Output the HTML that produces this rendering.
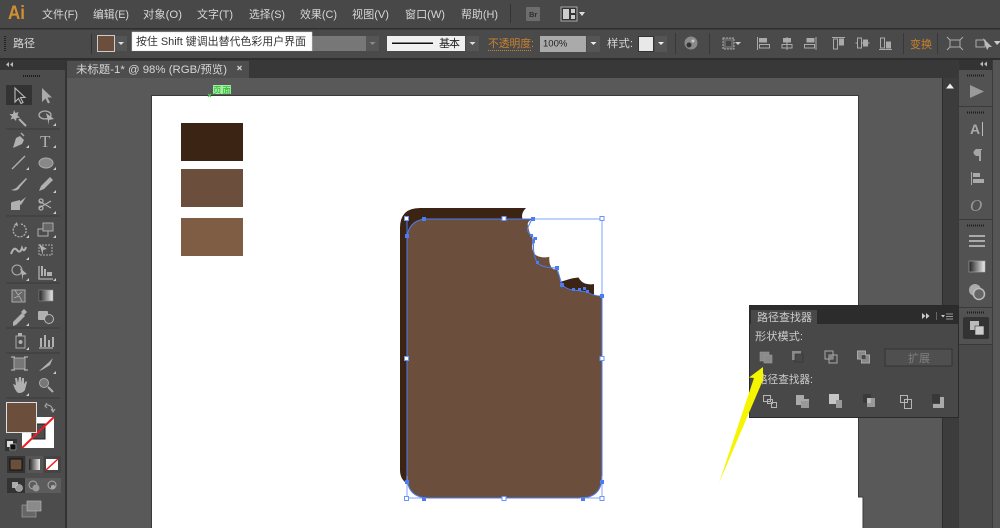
<!DOCTYPE html>
<html><head><meta charset="utf-8"><style>
html,body{margin:0;padding:0;background:#595959;width:1000px;height:528px;overflow:hidden}
svg{display:block;filter:blur(.3px)}
text{font-family:"Liberation Sans","Noto Sans CJK SC",sans-serif;font-size:11px;fill:#d6d6d6}
.i{fill:#b0b0b0}.is{stroke:#b0b0b0;fill:none;stroke-width:1.3}
</style></head><body>
<svg width="1000" height="528" viewBox="0 0 1000 528" xmlns="http://www.w3.org/2000/svg">
<!-- backgrounds -->
<rect width="1000" height="528" fill="#595959"/>
<rect width="1000" height="28" fill="#484848"/>
<rect y="28" width="1000" height="1.5" fill="#2e2e2e"/>
<rect y="29.5" width="1000" height="29" fill="#4a4a4a"/>
<rect y="58" width="1000" height="2" fill="#2e2e2e"/>
<!-- artboard -->
<rect x="151" y="95" width="708" height="433" fill="#3a3a3a"/>
<rect x="152" y="96" width="706" height="432" fill="#fff"/>
<rect x="858" y="497" width="4.5" height="31" fill="#fff"/>
<rect x="862.5" y="497" width="1" height="31" fill="#3a3a3a"/>
<rect x="858" y="496.500" width="5" height="1" fill="#3a3a3a"/>
<!-- tab bar -->
<rect x="66" y="60" width="893" height="18" fill="#383838"/>
<rect x="67" y="61" width="182" height="17" fill="#4e4e4e"/>
<text x="76" y="73" textLength="151" lengthAdjust="spacingAndGlyphs" fill="#cfcfcf">未标题-1* @ 98% (RGB/预览)</text>
<path d="M237.500 66l4 4m0-4l-4 4" stroke="#ccc" stroke-width="1.300"/>
<!-- scrollbar / right -->
<rect x="943" y="78" width="16" height="450" fill="#3c3c3c"/>
<path d="M946 88.500l4-5 4 5z" fill="#eee"/>
<rect x="942" y="78" width="1" height="450" fill="#2e2e2e"/>
<!-- right dock -->
<rect x="958" y="60" width="42" height="468" fill="#3a3a3a"/>
<rect x="959" y="60" width="33" height="10" fill="#333"/>
<rect x="993" y="60" width="7" height="468" fill="#555"/>
<path d="M987 61.500v5l-3-2.500zM983 61.500v5l-3-2.500z" fill="#bbb"/>
<rect x="959" y="70" width="33" height="36" fill="#525252"/>
<rect x="959" y="107" width="33" height="112" fill="#525252"/>
<rect x="959" y="220" width="33" height="87" fill="#525252"/>
<rect x="959" y="308" width="33" height="36" fill="#525252"/>
<rect x="959" y="345" width="33" height="183" fill="#4a4a4a"/>
<path d="M967 75.500h18M967 112.500h18M967 225.500h18M967 312.500h18" stroke="#1c1c1c" stroke-width="2" stroke-dasharray="1 1"/>
<path d="M970 85l14 6.500-14 6.500z" fill="#9a9a9a"/>
<text x="970" y="134" style="font-size:14px;font-weight:bold;fill:#aaa">A</text><rect x="982" y="122" width="1" height="14" fill="#bbb"/>
<path d="M971 149h11v1h-1v11h-2v-5h-3q-5-3.500 0-7z" fill="#a5a5a5"/>
<path d="M971.500 172v13" stroke="#aaa" fill="none"/><rect x="973" y="173" width="7" height="4" fill="#aaa"/><rect x="973" y="179" width="11" height="4" fill="#aaa"/>
<text x="970" y="211" style="font-size:17px;font-family:'Liberation Serif',serif;font-style:italic;fill:#999">O</text>
<path d="M969 236h16M969 241h16M969 246h16" stroke="#aaa" stroke-width="2"/>
<defs><linearGradient id="gr" x1="0" x2="1"><stop offset="0" stop-color="#222"/><stop offset="1" stop-color="#eee"/></linearGradient></defs>
<rect x="969" y="261" width="16" height="11" fill="url(#gr)" stroke="#aaa" stroke-width=".6"/>
<circle cx="975" cy="290" r="6" fill="#aaa"/><circle cx="979" cy="294" r="5.500" fill="#666" stroke="#bbb" stroke-width="1.500"/>
<rect x="963" y="317" width="26" height="22" rx="2" fill="#333"/>
<rect x="970" y="321" width="9" height="9" fill="#bbb"/><rect x="975" y="326" width="9" height="9" fill="#ccc" stroke="#333" stroke-width=".6"/>

<!-- Menu -->
<text x="8" y="19" style="font-size:19px;font-weight:bold;fill:#d09030" textLength="17" lengthAdjust="spacingAndGlyphs">Ai</text>
<text x="42" y="18" textLength="36" lengthAdjust="spacingAndGlyphs">文件(F)</text>
<text x="93" y="18" textLength="36" lengthAdjust="spacingAndGlyphs">编辑(E)</text>
<text x="143" y="18" textLength="39" lengthAdjust="spacingAndGlyphs">对象(O)</text>
<text x="197" y="18" textLength="36" lengthAdjust="spacingAndGlyphs">文字(T)</text>
<text x="249" y="18" textLength="36" lengthAdjust="spacingAndGlyphs">选择(S)</text>
<text x="300" y="18" textLength="37" lengthAdjust="spacingAndGlyphs">效果(C)</text>
<text x="352" y="18" textLength="37" lengthAdjust="spacingAndGlyphs">视图(V)</text>
<text x="405" y="18" textLength="40" lengthAdjust="spacingAndGlyphs">窗口(W)</text>
<text x="461" y="18" textLength="37" lengthAdjust="spacingAndGlyphs">帮助(H)</text>
<rect x="510" y="4" width="1" height="19" fill="#333"/>
<rect x="526" y="7" width="14" height="14" rx="1" fill="#6d6d6d"/><text x="529" y="17" style="font-size:7.500px;font-weight:bold;fill:#2e2e2e">Br</text>
<rect x="561" y="7" width="16" height="14" fill="#333" stroke="#aaa"/><rect x="563" y="9" width="6" height="10" fill="#ccc"/><rect x="571" y="9" width="4" height="4" fill="#ccc"/><rect x="571" y="15" width="4" height="4" fill="#ccc"/>
<path d="M579 12h6l-3 4z" fill="#ddd"/>

<!-- Control bar -->
<path d="M5 36v15" stroke="#222" stroke-width="2" stroke-dasharray="1 1"/>
<text x="13" y="47" textLength="22" lengthAdjust="spacingAndGlyphs">路径</text>
<rect x="91" y="34" width="1" height="20" fill="#333"/>
<rect x="97.500" y="35.500" width="17" height="16" fill="#6b4f3c" stroke="#ccc"/>
<rect x="115" y="36" width="12" height="15" fill="#555"/><path d="M118 42h6l-3 3z" fill="#ddd"/>
<rect x="312" y="36" width="54" height="15" fill="#777"/>
<rect x="366" y="36" width="13" height="15" fill="#555"/><path d="M369.500 42h6l-3 3z" fill="#888"/>
<rect x="132" y="32" width="180" height="19" fill="#fff" stroke="#ddd" stroke-width=".5"/>
<rect x="132" y="51" width="180" height="1" fill="#333" opacity=".5"/>
<text x="136" y="45" textLength="170" lengthAdjust="spacingAndGlyphs" style="fill:#333">按住 Shift 键调出替代色彩用户界面</text>
<rect x="387" y="36" width="78" height="15" fill="#f0f0f0"/>
<rect x="392" y="42.500" width="41" height="1.500" fill="#111"/>
<text x="439" y="47" textLength="21" style="fill:#222">基本</text>
<rect x="466" y="36" width="13" height="15" fill="#555"/><path d="M469.500 42h6l-3 3z" fill="#ddd"/>
<text x="488" y="47" textLength="46" lengthAdjust="spacingAndGlyphs" style="fill:#c9822e">不透明度:</text>
<path d="M488 50.500h43" stroke="#c9822e" stroke-dasharray="1 1"/>
<rect x="540" y="36" width="46" height="16" fill="#aaa"/>
<text x="543" y="46.500" style="font-size:9.500px;fill:#222">100%</text>
<rect x="587" y="36" width="13" height="16" fill="#555"/><path d="M590.500 42h6l-3 3z" fill="#eee"/>
<text x="607" y="47" textLength="26" lengthAdjust="spacingAndGlyphs">样式:</text>
<rect x="638" y="36" width="16" height="16" fill="#333"/><rect x="639" y="37" width="14" height="14" fill="#e8e8e8"/>
<rect x="655" y="36" width="12" height="16" fill="#555"/><path d="M658 42h6l-3 3z" fill="#eee"/>
<rect x="675" y="33" width="1" height="21" fill="#383838"/>
<circle cx="691" cy="43" r="6.500" fill="#8a8a8a"/><circle cx="689" cy="45" r="2.500" fill="#333"/><circle cx="693" cy="41" r="1.500" fill="#ccc"/>
<rect x="709" y="33" width="1" height="21" fill="#383838"/>
<rect x="723" y="38" width="11" height="11" fill="#666" stroke="#aaa" stroke-dasharray="2 1"/><rect x="726" y="41" width="5" height="5" fill="#444"/>
<path d="M735 42h6l-3 3z" fill="#ccc"/>
<g fill="none" stroke="#aaa">
<path d="M757.500 37v13"/><rect x="759.500" y="38.500" width="7" height="3.500" fill="#aaa"/><rect x="759.500" y="44.500" width="10" height="3.500"/>
<path d="M787 37v13"/><rect x="783.500" y="38.500" width="7" height="3.500" fill="#aaa"/><rect x="782" y="44.500" width="10" height="3.500"/>
<path d="M816 37v13"/><rect x="807" y="38.500" width="7" height="3.500" fill="#aaa"/><rect x="804.500" y="44.500" width="10" height="3.500"/>
<path d="M832 37.500h13"/><rect x="833.500" y="39" width="4" height="10"/><rect x="839.500" y="39" width="4" height="6" fill="#aaa"/>
<path d="M855.500 43h14"/><rect x="857.500" y="38" width="4" height="10" fill="#4a4a4a"/><rect x="863.500" y="40" width="4" height="6" fill="#aaa"/>
<path d="M879 49.500h13"/><rect x="880.500" y="38" width="4" height="10"/><rect x="886.500" y="42" width="4" height="6" fill="#aaa"/>
</g>
<rect x="903" y="33" width="1" height="21" fill="#383838"/>
<text x="910" y="48" textLength="22" lengthAdjust="spacingAndGlyphs" style="fill:#c9822e">变换</text>
<rect x="937" y="33" width="1" height="21" fill="#383838"/>
<rect x="950" y="40" width="10" height="7" fill="none" stroke="#aaa"/>
<path d="M947 37l3 3m10 0l3-3m-13 10l-3 3m13-3l3 3" stroke="#aaa" fill="none"/>
<rect x="976" y="40" width="9" height="7" fill="none" stroke="#aaa"/>
<path d="M983 38l4 12 2-3 3 0z" fill="#bbb"/>
<path d="M994 41h6v1l-3 3z" fill="#ccc"/>

<!-- Left toolbox -->
<rect x="0" y="60" width="66" height="468" fill="#4c4c4c"/>
<rect x="65" y="60" width="2" height="468" fill="#333"/>
<rect x="0" y="60" width="65" height="10" fill="#353535"/>
<path d="M9 62v5l-3-2.500zM13 62v5l-3-2.500z" fill="#bbb"/>
<path d="M23 76h18" stroke="#1c1c1c" stroke-width="2" stroke-dasharray="1 1"/>
<rect x="6" y="85" width="26" height="20" fill="#333"/>
<path d="M15 88v14l3.500-3.500 2.500 5 2-1-2.500-5h4.500z" fill="none" stroke="#bbb" stroke-width="1.100"/>
<path d="M42 88v14l3.500-3.500 2.500 5 2-1-2.500-5h4.500z" fill="#aaa"/>
<g class="i">
<path d="M14 110l1.500 3 3-1-1 3.500 2.500 2-3.500.5-.5 3-2.500-2.500-3 1 1.500-3-2.500-2.500 3.500 0z"/><path d="M19 119l7 7" class="is" style="stroke-width:2"/>
<ellipse cx="45" cy="115" rx="6" ry="4" class="is"/><path d="M46 113l8 6-5 1 0 5z"/>
<path d="M13 148l3-10 4-2 4 4-2 4-9 4z"/><path d="M24 136l-3-3" class="is"/>
<text x="40" y="147" style="font-family:'Liberation Serif',serif;font-size:17px;fill:#b0b0b0">T</text>
<path d="M12 169l13-13" class="is"/>
<ellipse cx="46" cy="163" rx="7" ry="5" fill="#888" stroke="#aaa"/>
<path d="M11 190q5-1 7-4l8-8 1 1-7 8q-2 5-9 3z"/>
<path d="M39 191l2-5 9-9 3 3-9 9z"/>
<path d="M12 202l8-2 0 10h-9v-7zM18 203l8-6-5 8z"/>
<path d="M39 201l12 7M39 208l12-7" class="is"/><circle cx="41" cy="201" r="2" class="is"/><circle cx="41" cy="208" r="2" class="is"/>
<path d="M21 224a6.500 6.500 0 1 1-5 1" class="is" stroke-dasharray="2 1.200"/><path d="M17 222l-3 3 4 1z"/>
<rect x="38" y="229" width="10" height="7" class="is" style="stroke-width:1"/><rect x="43" y="223" width="10" height="8" fill="#666" stroke="#aaa"/>
<path d="M11 254q3-8 6-4t5-2q2 5 4-1" class="is" style="stroke-width:2"/>
<rect x="39" y="245" width="13" height="10" class="is" stroke-dasharray="2 1" style="stroke-width:1"/><path d="M39 244l8 5-4 1 0 5z"/>
<circle cx="17" cy="270" r="5" class="is" style="stroke-width:1"/><path d="M20 268l7 6-4 1 0 5z"/>
<path d="M39 266v13h14" class="is"/><rect x="41" y="266" width="2" height="10"/><rect x="44" y="269" width="2" height="7"/><rect x="47" y="272" width="5" height="4"/>
<rect x="12" y="290" width="13" height="12" fill="#666" stroke="#aaa"/><path d="M15 290l3 5 4-3M14 298l5-2 3 5" class="is" style="stroke-width:.8"/>
</g>
<rect x="39" y="290" width="14" height="11" fill="url(#gr)" stroke="#888" stroke-width=".6"/>
<g class="i">
<path d="M13 322l9-9 3 3-9 9-3 1z"/><path d="M21 312l3-3 3 3-3 3z"/>
<rect x="38" y="311" width="10" height="9" rx="1"/><circle cx="49" cy="319" r="4.500" fill="#555" stroke="#bbb"/>
<rect x="16" y="336" width="9" height="12" fill="none" stroke="#aaa"/><circle cx="20.500" cy="342" r="2"/><rect x="18" y="333" width="4" height="3"/>
<path d="M39 348h14" class="is"/><rect x="40" y="338" width="2" height="9"/><rect x="44" y="335" width="2" height="12"/><rect x="48" y="340" width="2" height="7"/><rect x="52" y="337" width="2" height="10"/>
<rect x="14" y="358" width="11" height="11" fill="#777" stroke="#aaa"/><path d="M11 357h4m9 0h4m-17 13h4m9 0h4" class="is"/>
<path d="M39 371l9-8 5-5-3 7-8 5z"/>
<path d="M13 384l3 1-1-7 2 0 1 5 1-6 2 0 0 6 1-5 2 0 0 6 2-3 1 1-2 8q-2 3-6 3-3 0-6-9z"/>
<circle cx="44" cy="383" r="4.500" fill="#777" stroke="#aaa"/><path d="M48 387l5 5" class="is" style="stroke-width:2"/>
</g>
<path fill="#ccc" d="M29 148l-3 0 3-3zM56 126l-3 0 3-3zM56 148l-3 0 3-3zM29 170l-3 0 3-3zM56 170l-3 0 3-3zM56 193l-3 0 3-3zM56 214l-3 0 3-3zM29 238l-3 0 3-3zM56 238l-3 0 3-3zM29 260l-3 0 3-3zM29 281l-3 0 3-3zM56 281l-3 0 3-3zM29 326l-3 0 3-3zM29 350l-3 0 3-3zM56 374l-3 0 3-3zM29 396l-3 0 3-3z"/>
<path d="M6 129h54M6 216h54M6 283h54M6 328h54M6 353h54M6 398h54" stroke="#3a3a3a"/>
<!-- fill/stroke -->
<rect x="22" y="417" width="32" height="31" fill="#fff"/>
<rect x="32" y="424" width="13" height="15" fill="#4c4c4c" stroke="#222"/>
<path d="M22 448l32-31" stroke="#f01a22" stroke-width="2"/>
<rect x="6.500" y="402.500" width="30" height="30" fill="#6b4f3c" stroke="#ddd"/>
<path d="M47 403l-2 3 2 2M45 405q7-1 8 6m-2-2l2 3 2-3" fill="none" stroke="#aaa" stroke-width="1.100"/>
<rect x="5" y="439" width="12" height="12" fill="#333"/><rect x="7" y="441" width="6" height="6" fill="#ddd"/><rect x="10" y="444" width="6" height="6" fill="#111" stroke="#ccc" stroke-width=".6"/>
<rect x="7" y="456" width="18" height="17" fill="#333"/><rect x="10" y="459" width="12" height="11" fill="#6b4f3c" stroke="#111"/>
<rect x="26" y="456" width="17" height="17" fill="#555"/><rect x="29" y="459" width="11" height="11" fill="url(#gr)"/>
<rect x="44" y="456" width="17" height="17" fill="#444"/><rect x="46" y="459" width="12" height="11" fill="#fff"/><path d="M46 470l12-11" stroke="#f01a22" stroke-width="1.500"/>
<rect x="7" y="478" width="18" height="15" fill="#333"/><rect x="25" y="478" width="18" height="15" fill="#5c5c5c"/><rect x="43" y="478" width="18" height="15" fill="#5c5c5c"/>
<rect x="12" y="482" width="6" height="6" fill="#aaa"/><circle cx="19" cy="488" r="3.500" fill="#999" stroke="#ccc" stroke-width=".6"/>
<circle cx="33" cy="485" r="4" fill="none" stroke="#aaa"/><circle cx="36" cy="488" r="3.500" fill="#999"/>
<circle cx="52" cy="485" r="4" fill="none" stroke="#aaa"/><circle cx="53" cy="487" r="2" fill="#aaa"/>
<rect x="22" y="505" width="14" height="12" fill="#666" stroke="#aaa" stroke-width=".6"/><rect x="27" y="501" width="14" height="10" fill="#8a8a8a" stroke="#bbb" stroke-width=".6"/>

<!-- Artwork -->
<rect x="181" y="123" width="62" height="38" fill="#3c2415"/>
<rect x="181" y="169" width="62" height="38" fill="#6b4f3c"/>
<rect x="181" y="218" width="62" height="38" fill="#7f5d45"/>
<rect x="213" y="85" width="18" height="9" fill="#a4eca4"/>
<text x="213" y="93" style="font-size:8.500px;fill:#1fb41f" textLength="18">页面</text>
<path d="M208 94l3 3m0-3l-3 3" stroke="#3fe03f"/>
<path d="M400 228Q400 208 420 208H526Q520 214 523 220L525 236 550 285 566.500 280Q572 278 578.500 277.500 581 282 585 283.500 590 285 594 284V300L420 484H408Q400 480 400 470Z" fill="#3c2415"/>
<path d="M407 240Q407 219 426 219H532.500Q526 222 528.300 226.700 529 233 531.700 236L533.300 241.700Q531.500 246 532.700 250 534 256 541 257 546 258 549.300 256.700 549 263 550.700 266 552 270 556.700 269.300 558 274 560 277.300 559.500 282 561.700 285 566 290 574 290L586.700 291.700Q593 296 602 296V476Q602 498 580 498H429Q407 498 407 476Z" fill="#6b4f3c"/>
<g fill="none" stroke="#4a7cf5" stroke-width="1">
<path d="M407 238Q408 222 424 219H532"/>
<path d="M407 219V476Q407 498 429 498H580Q602 498 602 476V296"/>
<path d="M532 219 528 227Q526 232 533 237L534 242Q532 250 537 263 543 268 557 268L562 285Q568 290 574 290L587 292Q594 296 601 296"/>
<path d="M532 219H602V296" stroke="#7fa4ff"/>
<path d="M407 476V498H424M602 476V498H580" stroke="#7fa4ff"/>
</g>
<g fill="#4a7cf5">
<rect x="405" y="234" width="4" height="4"/><rect x="422" y="217" width="4" height="4"/><rect x="531" y="217" width="4" height="4"/>
<rect x="530" y="234" width="3" height="3"/><rect x="534" y="237" width="3" height="3"/><rect x="532" y="240" width="3" height="3"/>
<rect x="536" y="261" width="3" height="3"/><rect x="555" y="266" width="4" height="4"/><rect x="560" y="283" width="4" height="4"/>
<rect x="572" y="288" width="3" height="3"/><rect x="578" y="288" width="3" height="3"/><rect x="583" y="287" width="3" height="3"/><rect x="586" y="290" width="3" height="3"/><rect x="600" y="294" width="4" height="4"/>
<rect x="405" y="480" width="4" height="4"/><rect x="422" y="497" width="4" height="4"/><rect x="581" y="497" width="4" height="4"/><rect x="600" y="480" width="4" height="4"/>
</g>
<g fill="#fff" stroke="#6d94f5">
<rect x="404.500" y="216.500" width="4" height="4"/><rect x="502" y="216.500" width="4" height="4"/><rect x="600" y="216.500" width="4" height="4"/>
<rect x="404.500" y="356.500" width="4" height="4"/><rect x="600" y="356.500" width="4" height="4"/>
<rect x="404.500" y="496.500" width="4" height="4"/><rect x="502" y="496.500" width="4" height="4"/><rect x="600" y="496.500" width="4" height="4"/>
</g>

<!-- Pathfinder panel -->
<rect x="749" y="305" width="210" height="113" fill="#2a2a2a"/>
<rect x="750" y="306" width="208" height="111" fill="#484848"/>
<rect x="750" y="306" width="208" height="18" fill="#2c2c2c"/>
<rect x="751" y="310" width="66" height="14" fill="#484848"/>
<text x="757" y="321" textLength="55" lengthAdjust="spacingAndGlyphs" style="fill:#ccc">路径查找器</text>
<path d="M922 313v6l3.500-3zM926 313v6l3.500-3z" fill="#ccc"/>
<rect x="936" y="312" width="1" height="8" fill="#666"/>
<path d="M941 315h4l-2 2.500z" fill="#ccc"/><path d="M946 314h7M946 316.500h7M946 319h7" stroke="#999"/>
<text x="755" y="340" textLength="48" lengthAdjust="spacingAndGlyphs" style="fill:#ccc">形状模式:</text>
<!-- shape modes -->
<rect x="760" y="352" width="9" height="9" fill="#8a8a8a" stroke="#999" stroke-width=".6"/><rect x="764" y="355" width="8" height="8" fill="#8a8a8a" stroke="#999" stroke-width=".6"/>
<rect x="792" y="351" width="9" height="9" fill="#8a8a8a"/><rect x="795" y="354" width="8" height="8" fill="#484848" stroke="#333" stroke-width=".6"/>
<rect x="825" y="351" width="8" height="8" fill="none" stroke="#aaa"/><rect x="829" y="355" width="8" height="8" fill="none" stroke="#aaa"/><rect x="829" y="355" width="4" height="4" fill="#888"/>
<rect x="857.500" y="351" width="8" height="8" fill="#888" stroke="#aaa"/><rect x="861.500" y="355" width="8" height="8" fill="#888" stroke="#aaa"/><rect x="861.500" y="355" width="4" height="4" fill="#484848"/>
<rect x="885" y="349" width="67" height="17" fill="#4f4f4f" stroke="#333"/>
<text x="908" y="362" textLength="22" style="fill:#808080">扩展</text>
<text x="757" y="383" textLength="56" lengthAdjust="spacingAndGlyphs" style="fill:#ccc">路径查找器:</text>
<!-- pathfinders -->
<g fill="none" stroke="#b5b5b5">
<rect x="763.500" y="395.500" width="7" height="6"/><rect x="767.500" y="399.500" width="5" height="4"/><rect x="771.500" y="402.500" width="5" height="5"/>
<rect x="900.500" y="395.500" width="7" height="7"/><rect x="904.500" y="399.500" width="3" height="3"/><rect x="904.500" y="399.500" width="7" height="9"/>
</g>
<g fill="#aaa">
<path d="M796 395h8v4h5v2h-4v4h-9z"/><rect x="801" y="401" width="8" height="7" fill="#999"/>
<rect x="829" y="394" width="10" height="10" fill="#c5c5c5"/><rect x="836" y="400" width="6" height="8" fill="#999"/>
<rect x="863" y="394" width="8" height="9" fill="#3a3a3a"/><rect x="867" y="398" width="8" height="9" fill="#999"/><rect x="867" y="398" width="4" height="5" fill="#bbb"/>
<rect x="932" y="394" width="8" height="9" fill="#383838"/><path d="M940 397h4v11h-11v-4h7z" fill="#aaa"/>
</g>
<!-- yellow arrow -->
<path d="M763 367 749 377.500 754 378 719 483 763 380Z" fill="#f5f500"/>
</svg>
</body></html>
